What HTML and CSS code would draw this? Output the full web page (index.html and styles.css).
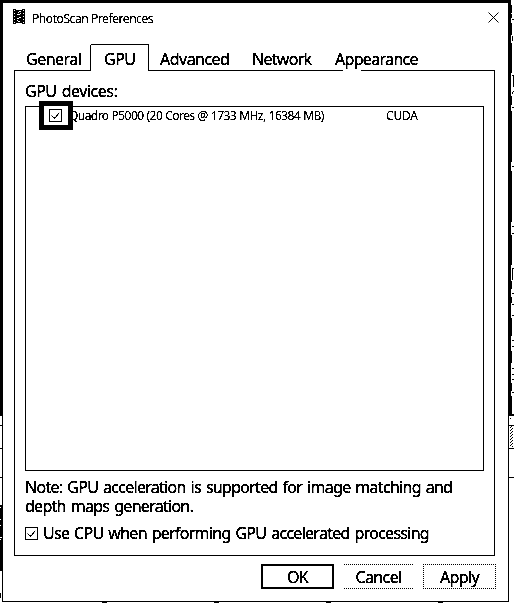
FILE: index.html
```
<!DOCTYPE html>
<html lang="en">
<head>
<meta charset="utf-8">
<title>PhotoScan Preferences</title>
<link rel="stylesheet" href="styles.css">
</head>
<body>
<svg class="desktop" width="514" height="603" shape-rendering="crispEdges" aria-hidden="true">
  <path d="M0 0H511V416H508V3H3V416H0ZM0 505H3V571H0Z"/>
  <path d="M2 416h1v186h-1zM508 416h1v186h-1zM2 601h507v1H2zM0 425h2v1H0zM0 448h2v1H0zM0 477h2v1H0zM509 425h5v1h-5zM509 448h5v1h-5zM509 477h5v1h-5zM508 414h6v2h-6zM0 593h1v5h-1zM102 602h5v1h-5zM214 602h5v1h-5zM326 602h5v1h-5zM438 602h5v1h-5z"/>
  <path d="M511 5h1v8h-1zM511 14h1v4h-1zM512 19h2v1h-2zM511 23h1v12h-1zM512 36h1v5h-1zM511 43h1v30h-1zM512 75h2v1h-2zM513 76h1v11h-1zM512 92h1v2h-1zM513 91h1v1h-1zM511 96h1v9h-1zM512 107h2v1h-2zM511 111h1v51h-1zM512 166h2v1h-2zM511 171h1v51h-1zM512 226h2v1h-2zM512 233h2v1h-2zM511 235h1v30h-1zM512 268h2v1h-2zM512 269h1v11h-1zM511 281h1v8h-1zM512 293h2v1h-2zM511 297h1v6h-1zM512 304h2v1h-2zM512 315h2v1h-2zM511 318h1v18h-1zM512 340h2v1h-2zM512 346h2v1h-2zM511 351h1v12h-1zM512 368h2v1h-2zM512 374h2v1h-2zM512 379h2v1h-2zM511 383h1v8h-1zM512 392h2v1h-2zM511 396h1v9h-1zM511 400h1v14h-1zM510 418h1v1h-1z"/>
  <path class="hatch" d="M510.5 427v20M512.5 428v20M511.5 426v21"/>
  <path class="chip" d="M0 507h1v1H0zM0 519h1v1H0zM0 525h1v1H0zM0 537h2v1H0zM0 539h1v1H0z"/>
</svg>
<main class="dialog">
  <header class="titlebar">
    <svg class="app-icon" width="12" height="15" shape-rendering="crispEdges">
      <path d="M0 0h12v15H0z"/>
      <path class="chip" d="M1 1h1v1H1zM1 4h1v1H1zM1 7h1v1H1zM1 10h1v1H1zM1 13h1v1H1zM10 1h1v1h-1zM10 4h1v1h-1zM10 7h1v1h-1zM10 10h1v1h-1zM10 13h1v1h-1zM3 0h6v1H3zM6 2h2v1H6zM5 3h1v1H5zM7 4h1v1H7zM4 5h3v1H4zM6 8h2v1H6zM4 9h2v1H4zM4 11h1v1H4zM5 12h2v1H5zM3 14h6v1H3z"/>
    </svg>
    <h1 class="title">PhotoScan Preferences</h1>
    <svg class="close" width="11" height="11"><path d="M.5 .5l10 10M10.5 .5l-10 10"/></svg>
  </header>
  <nav class="tabs">
    <span class="tab general">General</span>
    <span class="tab active">GPU</span>
    <span class="tab advanced">Advanced</span>
    <span class="tab network">Network</span>
    <span class="tab appearance">Appearance</span>
  </nav>
  <section class="panel">
    <div class="label">GPU devices:</div>
    <div class="list">
      <div class="row">
        <span class="mark"><svg class="check" width="13" height="13"><path d="M.5 .5h12v12H.5zM2.5 6.5l3 3 5-6"/></svg></span>
        <span class="device">Quadro P5000 (20 Cores @ 1733 MHz, 16384 MB)</span>
        <span class="kind">CUDA</span>
      </div>
    </div>
    <p class="note">Note: GPU acceleration is supported for image matching and<br>depth maps generation.</p>
    <label class="cpu"><svg class="check" width="13" height="13"><path d="M.5 .5h12v12H.5zM2.5 6.5l3 3 5-6"/></svg><span>Use CPU when performing GPU accelerated processing</span></label>
  </section>
  <footer class="buttons">
    <button class="btn ok">OK</button>
    <button class="btn cancel">Cancel</button>
    <button class="btn">Apply</button>
  </footer>
</main>
</body>
</html>
```
FILE: styles.css
```
* { box-sizing: border-box; }
html, body { margin: 0; background: #fff; }
body {
  position: relative;
  width: 514px;
  height: 603px;
  overflow: hidden;
  color: #000;
  font-family: "Noto Sans", sans-serif;
  font-size: 16px;
  letter-spacing: -.52px;
  -webkit-text-stroke: .3px #000;
  filter: grayscale(1) contrast(8);
}
.desktop { position: absolute; left: 0; top: 0; }
.hatch { fill: none; stroke: #000; stroke-dasharray: 1 2; }
.chip { fill: #fff; }
.dialog {
  display: flex;
  flex-direction: column;
  margin: 0 19px 0 14px;
  padding-top: 3px;
  height: 601px;
  white-space: nowrap;
}
.titlebar { display: flex; align-items: flex-start; height: 41px; margin-right: -4px; }
.app-icon { margin: 6px 7px 0 -1px; }
.title {
  margin: 7px 0 0;
  font-size: 12px;
  font-weight: 400;
  line-height: 18px;
  letter-spacing: -.42px;
  -webkit-text-stroke-width: .15px;
}
.close { margin: 9px 0 0 auto; fill: none; stroke: #000; stroke-width: 1; }
.tabs { display: flex; height: 27px; }
.tab { height: 27px; line-height: 22px; padding-top: 4px; border-bottom: 1px solid #000; }
.tab.general { width: 76px; padding-left: 12px; }
.tab.active { width: 59px; padding: 3px 0 0 13px; border: 1px solid #000; border-bottom: 0; border-radius: 2px 2px 0 0; }
.tab.advanced { width: 90px; padding-left: 11px; }
.tab.network { width: 90px; padding-left: 13px; letter-spacing: -.7px; }
.tab.appearance {
  flex: 1;
  padding-left: 6px;
  border-bottom: 0;
  letter-spacing: -.68px;
  background: linear-gradient(90deg, #000 14px, #fff 14px 32px, #000 32px) bottom / 100% 1px no-repeat;
}
.panel { height: 485px; border: 1px solid #000; border-top: 0; padding: 9px 10px 0; }
.label { height: 26px; line-height: 22px; letter-spacing: -.48px; word-spacing: 1.4px; }
.list { width: 459px; height: 365px; border: 1px solid #000; }
.row {
  display: flex;
  height: 18px;
  font-size: 12px;
  line-height: 18px;
  letter-spacing: -.56px;
  word-spacing: .5px;
  -webkit-text-stroke-width: .15px;
}
.mark {
  display: flex;
  width: 34px;
  height: 29px;
  margin: -6px 0 0 13px;
  padding: 3px 0 0 5px;
  border: 5px solid #000;
  background: #fff;
  z-index: 1;
}
.check { flex: none; fill: none; stroke: #000; stroke-width: 1.1; }
.device { width: 317px; margin-left: -4px; }
.kind { letter-spacing: -.2px; }
.note { margin: 7px 0 0; line-height: 19px; letter-spacing: -.72px; word-spacing: 1.5px; }
.cpu { display: flex; align-items: center; gap: 5px; height: 22px; margin-top: 6px; letter-spacing: -.73px; word-spacing: 1.5px; }
.buttons { display: flex; justify-content: flex-end; gap: 8px; margin: 8px -1px 0 0; }
.btn {
  width: 73px;
  height: 25px;
  padding: 0;
  border: 1px dotted #000;
  background: #fff;
  color: #000;
  font: inherit;
  line-height: 22px;
  letter-spacing: -.6px;
}
.btn.cancel { border-left-color: #fff; border-right-color: #fff; }
.btn.ok { border: 2px solid #000; }
```
